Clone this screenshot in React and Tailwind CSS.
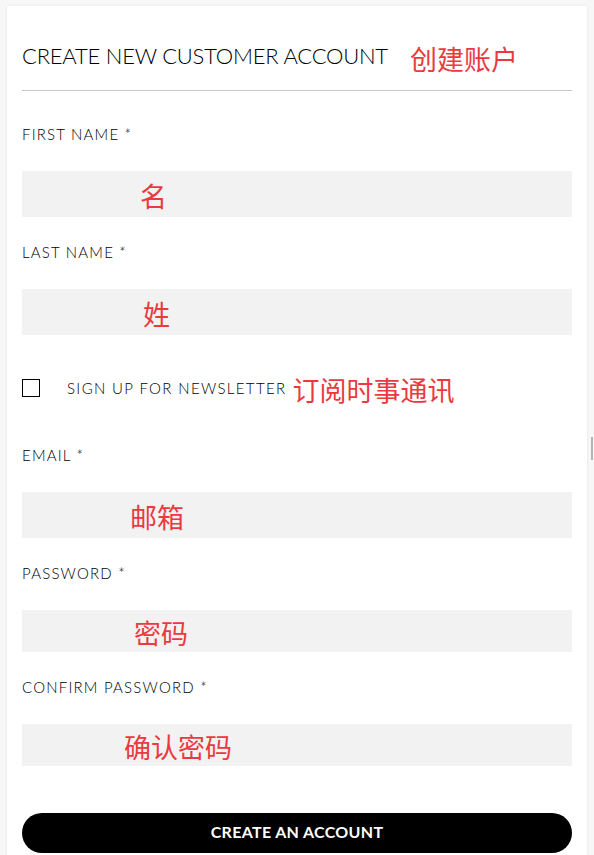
const latin = { fontFamily: 'Lato, "Noto Sans", "Noto Sans CJK SC", sans-serif' };

function Note({ children, className = "" }) {
  return (
    <span
      className={`text-[27px] leading-none text-[#ea3a40] ${className}`}
      style={{ fontFamily: '"Noto Sans CJK SC", "Noto Sans", sans-serif' }}
    >
      {children}
    </span>
  );
}

function Field({ label, note, notePad, top, height = "h-[46px]" }) {
  return (
    <div className={top}>
      <div className="h-5 text-[15px] font-light leading-5 tracking-[0.08em] text-black">
        {label}
      </div>
      <div className={`mt-[27px] flex ${height} items-center bg-[#f2f2f2]`} style={{ paddingLeft: notePad }}>
        <Note className="pt-[3px]">{note}</Note>
      </div>
    </div>
  );
}

export default function App() {
  return (
    <div className="flex min-h-[855px] bg-[#f7f7f7]" style={latin}>
      <div className="ml-[7px] mt-[6px] w-[580px] bg-white px-[15px] pb-6 pt-[29px] shadow-[0_0_3px_rgba(0,0,0,0.08)]">
        <div className="flex h-10 items-center">
          <h1 className="text-[22px] font-light tracking-[-0.01em] text-black">
            CREATE NEW CUSTOMER ACCOUNT
          </h1>
          <Note className="ml-[22px] pt-[6px]">创建账户</Note>
        </div>
        <div className="mt-[15px] h-px bg-[#c6c6c6]" />

        <Field top="mt-[33px]" label="FIRST NAME *" note="名" notePad={118} />
        <Field top="mt-[25px]" label="LAST NAME *" note="姓" notePad={121} />

        <div className="mt-[43px] flex h-5 items-center">
          <span className="h-[18px] w-[18px] border-[1.5px] border-black" />
          <span className="ml-[27px] text-[15px] font-light tracking-[0.09em] text-black">
            SIGN UP FOR NEWSLETTER
          </span>
          <Note className="ml-[6px] pt-[2px]">订阅时事通讯</Note>
        </div>

        <Field top="mt-[47px]" label="EMAIL *" note="邮箱" notePad={108} />
        <Field top="mt-[25px]" label="PASSWORD *" note="密码" notePad={112} height="h-[42px]" />
        <Field top="mt-[25px]" label="CONFIRM PASSWORD *" note="确认密码" notePad={102} height="h-[42px]" />

        <button className="mt-[47px] flex h-10 w-full items-center justify-center rounded-full bg-black pb-[3px] text-[16px] font-bold tracking-[0.02em] text-white">
          CREATE AN ACCOUNT
        </button>
      </div>
      <div className="ml-[4px] mt-[437px] h-[23px] w-[2px] bg-[#b5b5b5]" />
    </div>
  );
}
